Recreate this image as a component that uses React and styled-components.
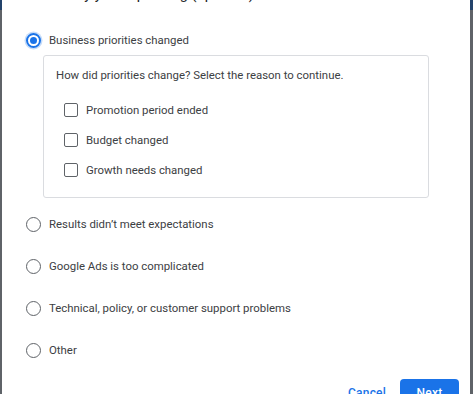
import React from "react";
import styled, { createGlobalStyle } from "styled-components";

const Global = createGlobalStyle`
  html, body { margin: 0; padding: 0; }
  body {
    background: linear-gradient(#23436b 0 10px, #5f6368 10px);
    font-family: Roboto, "Liberation Sans", Arial, sans-serif;
    overflow: hidden;
    height: 394px;
  }
`;

const Dialog = styled.div`
  margin-left: 2px;
  width: 468px;
  height: 394px;
  background: #fff;
  box-sizing: border-box;
  padding: 0 11px 0 16px;
  overflow: hidden;
`;

const Title = styled.div`
  margin-top: -15px;
  padding-left: 2px;
  font-size: 14.5px;
  line-height: 20px;
  color: #202124;
`;

const OptionList = styled.div`
  display: flex;
  flex-direction: column;
  padding-left: 8px;
  margin-top: 25px;
`;

const Row = styled.label`
  display: flex;
  align-items: center;
  gap: 8px;
  height: 20px;
  margin-top: ${(p) => p.$mt || 0}px;
  font-size: 11.4px;
  color: #3c4043;
`;

const Radio = styled.span`
  width: 15px;
  height: 15px;
  box-sizing: border-box;
  border-radius: 50%;
  border: ${(p) => (p.$checked ? "2px solid #1a73e8" : "1.5px solid #5f6368")};
  box-shadow: ${(p) => (p.$checked ? "0 0 0 1.5px rgba(26,115,232,0.25)" : "none")};
  display: flex;
  align-items: center;
  justify-content: center;
  flex: none;
  &::after {
    content: "";
    width: 7px;
    height: 7px;
    border-radius: 50%;
    background: ${(p) => (p.$checked ? "#1a73e8" : "transparent")};
  }
`;

const SubBox = styled.div`
  margin: 5px 0 0 17px;
  width: 386px;
  height: 143px;
  box-sizing: border-box;
  border: 1px solid #dadce0;
  border-radius: 3px;
  padding: 9px 12px 0 12px;
`;

const Prompt = styled.div`
  font-size: 11.4px;
  line-height: 20px;
  color: #3c4043;
`;

const CheckList = styled.div`
  display: flex;
  flex-direction: column;
  gap: 10px;
  margin-top: 15px;
  padding-left: 8px;
`;

const Checkbox = styled.span`
  width: 14px;
  height: 14px;
  box-sizing: border-box;
  border: 1.5px solid #5f6368;
  border-radius: 2px;
  flex: none;
`;

const Footer = styled.div`
  display: flex;
  justify-content: flex-end;
  align-items: center;
  gap: 6px;
  margin-top: 19px;
`;

const Button = styled.button`
  height: 28px;
  border: none;
  border-radius: 4px;
  padding: 0 ${(p) => (p.$primary ? 0 : 8)}px;
  width: ${(p) => (p.$primary ? "59px" : "auto")};
  background: ${(p) => (p.$primary ? "#1a73e8" : "transparent")};
  color: ${(p) => (p.$primary ? "#fff" : "#1a73e8")};
  font-family: Roboto, "Liberation Sans", Arial, sans-serif;
  font-size: 12px;
  font-weight: 500;
  letter-spacing: 0.2px;
`;

const Label = styled.span``;

const reasons = [
  "Results didn’t meet expectations",
  "Google Ads is too complicated",
  "Technical, policy, or customer support problems",
  "Other",
];

const subs = ["Promotion period ended", "Budget changed", "Growth needs changed"];

export default function App() {
  return (
    <>
      <Global />
      <Dialog>
        <Title>Tell us why you’re pausing (optional)</Title>
        <OptionList>
          <Row>
            <Radio $checked />
            <Label>Business priorities changed</Label>
          </Row>
          <SubBox>
            <Prompt>How did priorities change? Select the reason to continue.</Prompt>
            <CheckList>
              {subs.map((s) => (
                <Row key={s}>
                  <Checkbox />
                  <Label>{s}</Label>
                </Row>
              ))}
            </CheckList>
          </SubBox>
          {reasons.map((r, i) => (
            <Row key={r} $mt={i === 0 ? 16 : 22}>
              <Radio />
              <Label>{r}</Label>
            </Row>
          ))}
        </OptionList>
        <Footer>
          <Button>Cancel</Button>
          <Button $primary>Next</Button>
        </Footer>
      </Dialog>
    </>
  );
}
